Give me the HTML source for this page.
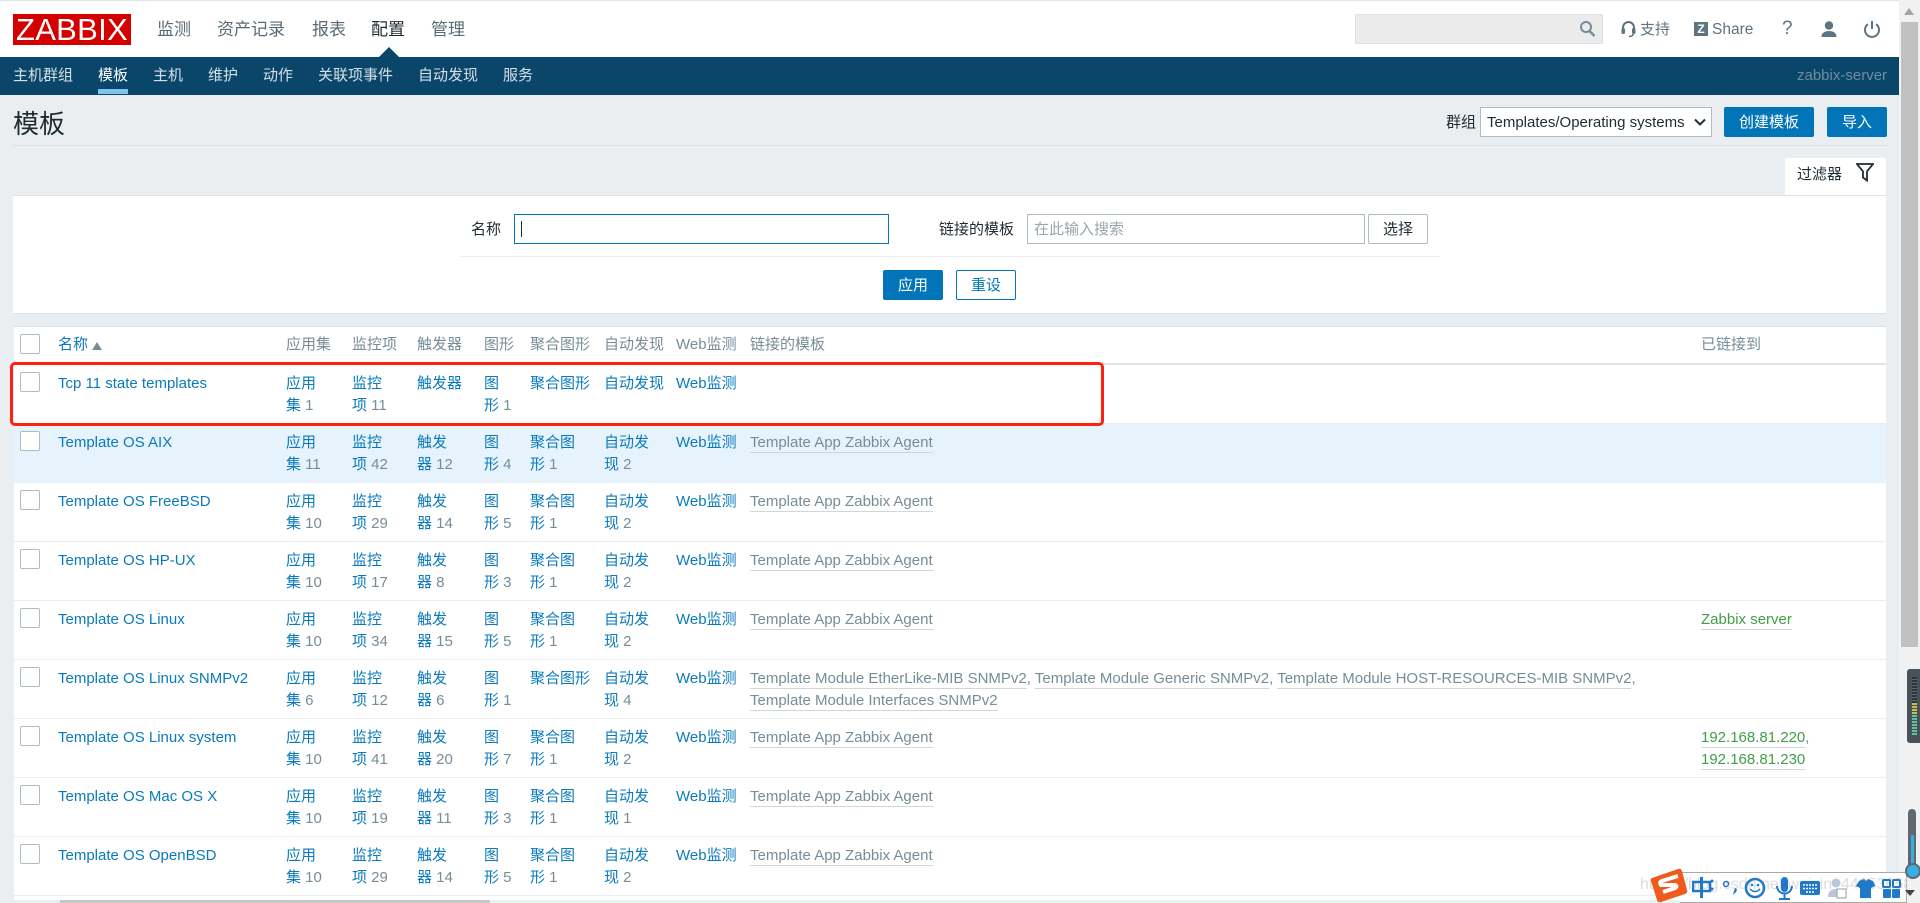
<!DOCTYPE html>
<html lang="zh-CN"><head><meta charset="utf-8"><title>模板</title>
<style>
html,body{margin:0;padding:0;width:1920px;height:903px;overflow:hidden;background:#ebeef0;font-family:"Liberation Sans","Noto Sans CJK SC",sans-serif;font-size:15px;color:#1f2c33}
div,span,a,svg{position:absolute}
span,a{white-space:nowrap;line-height:22px}
a{color:#0a7abc;text-decoration:none}
.n{color:#768d99}
.h{color:#768d99}
.r{left:14px;width:1872px;height:58px;border-bottom:1px solid #ebeef0;background:#fff}
.r a,.r span{top:8px}
.r .l2{top:30px}
.r b{font-weight:400;position:static;color:#768d99}
.cb{left:6px;top:7px;width:18px;height:18px;border:1px solid #acbbc4;border-radius:2px;background:#fff}
.nm{left:44px}
.c1{left:272px}.c2{left:338px}.c3{left:403px}.c4{left:470px}.c5{left:516px}.c6{left:590px}.c7{left:662px}.c8{left:736px}.c9{left:1687px}
.top a{color:#5a6b75;font-size:17px;top:19px}
.sub a{color:#d5e0e7;top:65px}
.btn{background:#0275b8;color:#fff;border-radius:2px;text-align:center;line-height:32px;height:30px;overflow:hidden}
.r a.lnk,.lnk{position:static;color:#768d99;border-bottom:1px solid #cfd7dc;padding-bottom:1px}
.r a.gr{color:#429e47}
</style></head><body>
<div style="left:0;top:0;width:1899px;height:57px;background:#fff;border-top:1px solid #dfe3e7;box-sizing:border-box"></div>

<div style="left:13px;top:14px;width:118px;height:31px;background:#d40000;color:#fff;font-size:31px;line-height:32px;text-align:center;letter-spacing:.3px;overflow:hidden">ZABBIX</div>
<div class="top" style="left:0;top:0;width:0;height:0">
<a style="left:157px">监测</a><a style="left:217px">资产记录</a><a style="left:312px">报表</a><a style="left:371px;color:#1f2c33">配置</a><a style="left:431px">管理</a>
</div>
<div style="left:379px;top:47px;width:0;height:0;border-left:10px solid transparent;border-right:10px solid transparent;border-bottom:10px solid #0a466a"></div>

<div style="left:1355px;top:14px;width:246px;height:28px;background:#ebebeb;border:1px solid #dfe3e7"></div>
<svg style="left:1579px;top:20px" width="17" height="18" viewBox="0 0 17 18"><circle cx="7" cy="7" r="5" fill="none" stroke="#768d99" stroke-width="2"/><path d="M10.5 11l5 5" stroke="#768d99" stroke-width="2.6"/></svg>
<svg style="left:1621px;top:20px" width="15" height="18" viewBox="0 0 15 18"><path d="M2 11V7.500a5.500 5.500 0 0 1 11 0V11" fill="none" stroke="#5f7380" stroke-width="2"/><rect x="0.500" y="8" width="3.500" height="6" rx="1.500" fill="#5f7380"/><rect x="11" y="8" width="3.500" height="6" rx="1.500" fill="#5f7380"/><path d="M12 14c0 2-2 2.500-4 2.500" fill="none" stroke="#5f7380" stroke-width="1.500"/></svg>
<span style="left:1640px;top:19px;color:#5f7380">支持</span>
<div style="left:1694px;top:22px;width:14px;height:14px;background:#5f7380;color:#fff;font:bold 12px/14px 'Liberation Sans',sans-serif;text-align:center">Z</div>
<span style="left:1712px;top:19px;color:#5f7380;font-size:15.500px">Share</span>
<span style="left:1782px;top:18px;color:#5f7380;font-size:19px">?</span>
<svg style="left:1820px;top:20px" width="18" height="18" viewBox="0 0 18 18"><circle cx="9" cy="5.500" r="4.200" fill="#5f7380"/><path d="M1.500 17c0-4 3-6 7.500-6s7.500 2 7.500 6z" fill="#5f7380"/></svg>
<svg style="left:1863px;top:20px" width="18" height="18" viewBox="0 0 18 18"><path d="M9 1v8" stroke="#5f7380" stroke-width="2" fill="none"/><path d="M5 4.200a7 7 0 1 0 8 0" stroke="#5f7380" stroke-width="2" fill="none"/></svg>

<div style="left:0;top:57px;width:1899px;height:38px;background:#0a466a"></div>
<div class="sub" style="left:0;top:0;width:0;height:0">
<a style="left:13px">主机群组</a><a style="left:98px;color:#fff">模板</a><a style="left:153px">主机</a><a style="left:208px">维护</a><a style="left:263px">动作</a><a style="left:318px">关联项事件</a><a style="left:418px">自动发现</a><a style="left:503px">服务</a>
</div>
<div style="left:98px;top:89px;width:30px;height:5px;background:#7fc4ee"></div>
<span style="left:1797px;top:65px;color:#6f8c9e">zabbix-server</span>

<span style="left:13px;top:110px;font-size:26px;line-height:28px">模板</span>
<span style="left:1446px;top:112px">群组</span>
<div style="left:1480px;top:107px;width:230px;height:28px;background:#fff;border:1px solid #acbbc4"></div>
<span style="left:1487px;top:112px;font-size:15px">Templates/Operating systems</span>
<svg style="left:1694px;top:118px" width="12" height="9" viewBox="0 0 12 9"><path d="M1 1.500l5 5 5-5" fill="none" stroke="#1f2c33" stroke-width="2"/></svg>
<div class="btn" style="left:1724px;top:107px;width:90px">创建模板</div>
<div class="btn" style="left:1827px;top:107px;width:60px">导入</div>
<div style="left:13px;top:145px;width:1874px;height:1px;background:#dfe3e7"></div>

<div style="left:1785px;top:158px;width:101px;height:39px;background:#fff;border-radius:2px 2px 0 0"></div>
<span style="left:1797px;top:164px;color:#1f2c33">过滤器</span>
<svg style="left:1856px;top:163px" width="18" height="19" viewBox="0 0 18 19"><path d="M1 1h16l-6 7.500v9l-4-3v-6z" fill="none" stroke="#1f2c33" stroke-width="1.800"/></svg>

<div style="left:13px;top:195px;width:1873px;height:119px;background:#fff;border-top:1px solid #dfe3e7;border-bottom:1px solid #dfe3e7;box-sizing:border-box"></div>
<span style="left:471px;top:219px">名称</span>
<div style="left:514px;top:214px;width:373px;height:28px;background:#fff;border:1px solid #0275b8"></div>
<div style="left:521px;top:221px;width:1px;height:16px;background:#1f2c33"></div>
<span style="left:939px;top:219px">链接的模板</span>
<div style="left:1027px;top:214px;width:336px;height:28px;background:#fff;border:1px solid #acbbc4"></div>
<span style="left:1034px;top:219px;color:#9aa5ab">在此输入搜索</span>
<div style="left:1368px;top:214px;width:58px;height:28px;background:#fff;border:1px solid #acbbc4;border-radius:2px;text-align:center;line-height:30px">选择</div>
<div style="left:459px;top:256px;width:981px;height:1px;background:#ebeef0"></div>
<div class="btn" style="left:883px;top:270px;width:60px">应用</div>
<div style="left:956px;top:270px;width:58px;height:28px;background:#fff;border:1px solid #0275b8;border-radius:2px;text-align:center;line-height:30px;color:#0275b8">重设</div>

<div style="left:14px;top:326px;width:1872px;height:39px;background:#fff;border-top:1px solid #dfe3e7;border-bottom:2px solid #dfe3e7;box-sizing:border-box"></div>
<div class="cb" style="left:20px;top:334px"></div>
<a style="left:58px;top:334px">名称</a>
<svg style="left:92px;top:342px" width="10" height="8" viewBox="0 0 10 8"><path d="M5 0l5 8H0z" fill="#768d99"/></svg>
<span class="h" style="left:286px;top:334px">应用集</span>
<span class="h" style="left:352px;top:334px">监控项</span>
<span class="h" style="left:417px;top:334px">触发器</span>
<span class="h" style="left:484px;top:334px">图形</span>
<span class="h" style="left:530px;top:334px">聚合图形</span>
<span class="h" style="left:604px;top:334px">自动发现</span>
<span class="h" style="left:676px;top:334px">Web监测</span>
<span class="h" style="left:750px;top:334px">链接的模板</span>
<span class="h" style="left:1701px;top:334px">已链接到</span>

<div class="r" style="top:365px"><div class="cb"></div><a class="nm">Tcp 11 state templates</a><a class="c1">应用</a><a class="c1 l2">集 <b>1</b></a><a class="c2">监控</a><a class="c2 l2">项 <b>11</b></a><a class="c3">触发器</a><a class="c4">图</a><a class="c4 l2">形 <b>1</b></a><a class="c5">聚合图形</a><a class="c6">自动发现</a><a class="c7">Web监测</a></div>

<div class="r" style="top:424px;background:#e6f3fc"><div class="cb"></div><a class="nm">Template OS AIX</a><a class="c1">应用</a><a class="c1 l2">集 <b>11</b></a><a class="c2">监控</a><a class="c2 l2">项 <b>42</b></a><a class="c3">触发</a><a class="c3 l2">器 <b>12</b></a><a class="c4">图</a><a class="c4 l2">形 <b>4</b></a><a class="c5">聚合图</a><a class="c5 l2">形 <b>1</b></a><a class="c6">自动发</a><a class="c6 l2">现 <b>2</b></a><a class="c7">Web监测</a><span class="c8"><a class="lnk">Template App Zabbix Agent</a></span></div>

<div class="r" style="top:483px"><div class="cb"></div><a class="nm">Template OS FreeBSD</a><a class="c1">应用</a><a class="c1 l2">集 <b>10</b></a><a class="c2">监控</a><a class="c2 l2">项 <b>29</b></a><a class="c3">触发</a><a class="c3 l2">器 <b>14</b></a><a class="c4">图</a><a class="c4 l2">形 <b>5</b></a><a class="c5">聚合图</a><a class="c5 l2">形 <b>1</b></a><a class="c6">自动发</a><a class="c6 l2">现 <b>2</b></a><a class="c7">Web监测</a><span class="c8"><a class="lnk">Template App Zabbix Agent</a></span></div>

<div class="r" style="top:542px"><div class="cb"></div><a class="nm">Template OS HP-UX</a><a class="c1">应用</a><a class="c1 l2">集 <b>10</b></a><a class="c2">监控</a><a class="c2 l2">项 <b>17</b></a><a class="c3">触发</a><a class="c3 l2">器 <b>8</b></a><a class="c4">图</a><a class="c4 l2">形 <b>3</b></a><a class="c5">聚合图</a><a class="c5 l2">形 <b>1</b></a><a class="c6">自动发</a><a class="c6 l2">现 <b>2</b></a><a class="c7">Web监测</a><span class="c8"><a class="lnk">Template App Zabbix Agent</a></span></div>

<div class="r" style="top:601px"><div class="cb"></div><a class="nm">Template OS Linux</a><a class="c1">应用</a><a class="c1 l2">集 <b>10</b></a><a class="c2">监控</a><a class="c2 l2">项 <b>34</b></a><a class="c3">触发</a><a class="c3 l2">器 <b>15</b></a><a class="c4">图</a><a class="c4 l2">形 <b>5</b></a><a class="c5">聚合图</a><a class="c5 l2">形 <b>1</b></a><a class="c6">自动发</a><a class="c6 l2">现 <b>2</b></a><a class="c7">Web监测</a><span class="c8"><a class="lnk">Template App Zabbix Agent</a></span><span class="c9"><a class="lnk gr">Zabbix server</a></span></div>

<div class="r" style="top:660px"><div class="cb"></div><a class="nm">Template OS Linux SNMPv2</a><a class="c1">应用</a><a class="c1 l2">集 <b>6</b></a><a class="c2">监控</a><a class="c2 l2">项 <b>12</b></a><a class="c3">触发</a><a class="c3 l2">器 <b>6</b></a><a class="c4">图</a><a class="c4 l2">形 <b>1</b></a><a class="c5">聚合图形</a><a class="c6">自动发</a><a class="c6 l2">现 <b>4</b></a><a class="c7">Web监测</a><span class="c8 n"><a class="lnk">Template Module EtherLike-MIB SNMPv2</a>, <a class="lnk">Template Module Generic SNMPv2</a>, <a class="lnk">Template Module HOST-RESOURCES-MIB SNMPv2</a>,</span><span class="c8 l2"><a class="lnk">Template Module Interfaces SNMPv2</a></span></div>

<div class="r" style="top:719px"><div class="cb"></div><a class="nm">Template OS Linux system</a><a class="c1">应用</a><a class="c1 l2">集 <b>10</b></a><a class="c2">监控</a><a class="c2 l2">项 <b>41</b></a><a class="c3">触发</a><a class="c3 l2">器 <b>20</b></a><a class="c4">图</a><a class="c4 l2">形 <b>7</b></a><a class="c5">聚合图</a><a class="c5 l2">形 <b>1</b></a><a class="c6">自动发</a><a class="c6 l2">现 <b>2</b></a><a class="c7">Web监测</a><span class="c8"><a class="lnk">Template App Zabbix Agent</a></span><span class="c9 n"><a class="lnk gr">192.168.81.220</a>,</span><span class="c9 l2"><a class="lnk gr">192.168.81.230</a></span></div>

<div class="r" style="top:778px"><div class="cb"></div><a class="nm">Template OS Mac OS X</a><a class="c1">应用</a><a class="c1 l2">集 <b>10</b></a><a class="c2">监控</a><a class="c2 l2">项 <b>19</b></a><a class="c3">触发</a><a class="c3 l2">器 <b>11</b></a><a class="c4">图</a><a class="c4 l2">形 <b>3</b></a><a class="c5">聚合图</a><a class="c5 l2">形 <b>1</b></a><a class="c6">自动发</a><a class="c6 l2">现 <b>1</b></a><a class="c7">Web监测</a><span class="c8"><a class="lnk">Template App Zabbix Agent</a></span></div>

<div class="r" style="top:837px"><div class="cb"></div><a class="nm">Template OS OpenBSD</a><a class="c1">应用</a><a class="c1 l2">集 <b>10</b></a><a class="c2">监控</a><a class="c2 l2">项 <b>29</b></a><a class="c3">触发</a><a class="c3 l2">器 <b>14</b></a><a class="c4">图</a><a class="c4 l2">形 <b>5</b></a><a class="c5">聚合图</a><a class="c5 l2">形 <b>1</b></a><a class="c6">自动发</a><a class="c6 l2">现 <b>2</b></a><a class="c7">Web监测</a><span class="c8"><a class="lnk">Template App Zabbix Agent</a></span></div>
<div style="left:14px;top:896px;width:1872px;height:4px;background:#fff"></div>
<div style="left:60px;top:900px;width:430px;height:3px;background:#c8c8c8"></div>
<div style="left:490px;top:900px;width:1400px;height:3px;background:#e6f5f0"></div>

<div style="left:10px;top:362px;width:1088px;height:58px;border:3.500px solid #ff2010;border-radius:5px"></div>

<div style="left:1899px;top:0;width:21px;height:903px;background:#f1f1f1"></div>
<div style="left:1901px;top:22px;width:17px;height:625px;background:#c1c1c1"></div>
<svg style="left:1904px;top:8px" width="10" height="7" viewBox="0 0 10 7"><path d="M5 0l5 7H0z" fill="#a3a3a3"/></svg>

<div style="left:1907px;top:669px;width:13px;height:74px;background:#47525b;border-radius:3px 0 0 3px"></div>
<div style="left:1912px;top:677px;width:5px;height:26px;background:repeating-linear-gradient(#2c353c 0 2px,#5d6870 2px 3px)"></div>
<div style="left:1912px;top:703px;width:5px;height:12px;background:repeating-linear-gradient(#c5c04d 0 2px,#47525b 2px 3px)"></div>
<div style="left:1912px;top:715px;width:5px;height:20px;background:repeating-linear-gradient(#5fc09a 0 2px,#47525b 2px 3px)"></div>

<div style="left:1908px;top:809px;width:8px;height:64px;background:#5d6870;border-radius:4px"></div>
<div style="left:1911px;top:835px;width:3px;height:36px;background:#35b0e2"></div>

<div style="left:1680px;top:872px;width:226px;height:29px;background:rgba(255,255,255,.9);border:1px solid #a9a9a9;border-left:0"></div>
<span style="left:1640px;top:874px;color:#dcdcdc;font-size:16px;width:268px;overflow:hidden">https://blog.csdn.net/weixin_44953658</span>
<svg style="left:1650px;top:867px" width="38" height="36" viewBox="0 0 38 36"><path d="M2 11L28 2q3-1 4 2l5 19q1 3-2 4L11 35q-3 1-4-2L1 14q-1-2 1-3z" fill="#f05a1c"/><path d="M28 9L12 14q-3 1-1 4l14 0q3 1 0 3L13 25" fill="none" stroke="#fff" stroke-width="4"/></svg>
<svg style="left:1692px;top:876px" width="216" height="26" viewBox="0 0 216 26" fill="#1f78c8">
<rect x="1" y="6" width="17" height="9" fill="none" stroke="#1f78c8" stroke-width="2.500"/><rect x="8" y="1" width="3" height="21"/><circle cx="20" cy="5" r="1.500"/><circle cx="20" cy="13" r="1.500"/>
<circle cx="34" cy="8" r="2.500" fill="none" stroke="#1f78c8" stroke-width="1.500"/><path d="M43 12q3 1 1 4l-3 3 1-4z"/>
<circle cx="63" cy="12" r="9" fill="none" stroke="#1f78c8" stroke-width="2.500"/><circle cx="60" cy="9" r="1.300"/><circle cx="66" cy="9" r="1.300"/><path d="M58 13q5 5 10 0" fill="none" stroke="#1f78c8" stroke-width="1.500"/>
<rect x="89" y="1" width="7" height="15" rx="3.500"/><path d="M85 10a7.500 7.500 0 0 0 15 0M92.500 17v5M87 23h11" fill="none" stroke="#1f78c8" stroke-width="2"/>
<rect x="108" y="5" width="20" height="14" rx="2"/><path d="M111 9h14M111 12.500h14M114 16h8" stroke="#fff" stroke-width="1.500" stroke-dasharray="2 1"/>
<circle cx="144" cy="7" r="4.500" fill="#b9c7d6"/><path d="M136 21q0-8 8-8t8 8z" fill="#b9c7d6"/><rect x="145" y="13" width="9" height="9" fill="#fff" stroke="#8aa0b5"/>
<path d="M167 5l5-2 2 2 2-2 5 2 2 5-4 2v10h-11V12l-4-2z"/>
<rect x="191" y="4" width="7" height="7" rx="1" fill="none" stroke="#1f78c8" stroke-width="2"/><rect x="201" y="4" width="7" height="7" rx="1" fill="none" stroke="#1f78c8" stroke-width="2"/><rect x="191" y="13" width="8" height="9" rx="1"/><rect x="200" y="13" width="8" height="9" rx="1"/>
</svg>
<svg style="left:1904px;top:889px" width="12" height="8" viewBox="0 0 12 8"><path d="M1 1h10L6 7z" fill="#444"/></svg>
<div style="left:1905px;top:863px;width:16px;height:16px;border-radius:50%;background:#35b0e2;border:2px solid #5d6870;box-sizing:border-box"></div>
</body></html>
